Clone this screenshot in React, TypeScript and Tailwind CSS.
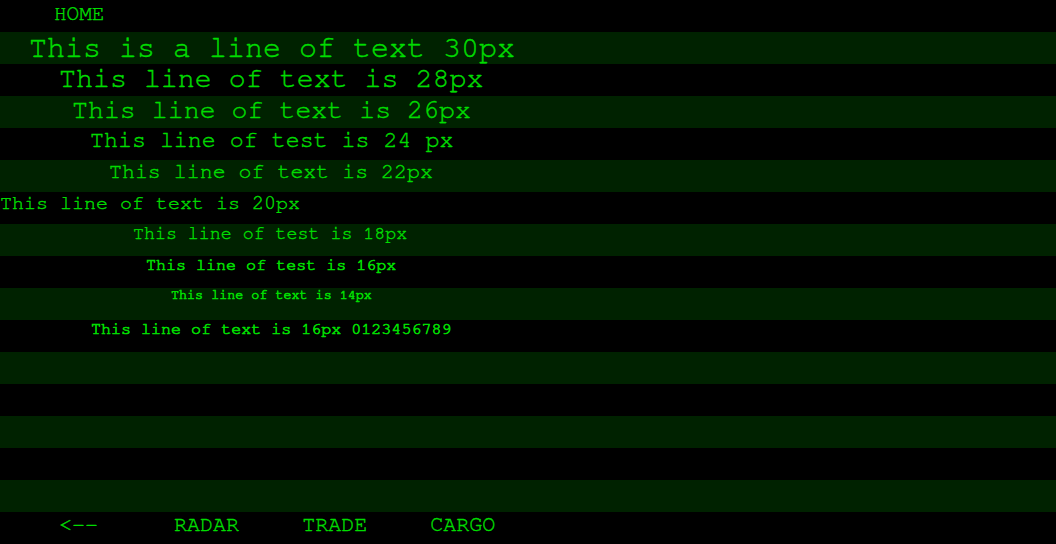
const rows = [
  { text: "This is a line of text 30px", cls: "pl-[29px] text-[30px]" },
  { text: "This line of text is 28px", cls: "pl-[59px] text-[28.3px]" },
  { text: "This line of text is 26px", cls: "pl-[72px] text-[26.6px]" },
  { text: "This line of test is 24 px", cls: "pl-[90px] text-[23.3px]" },
  { text: "This line of text is 22px", cls: "pl-[109px] text-[21.6px]" },
  { text: "This line of text is 20px", cls: "pl-0 text-[20px]" },
  { text: "This line of test is 18px", cls: "pl-[133px] text-[18.3px]" },
  { text: "This line of test is 16px", cls: "pl-[146px] text-[16.7px] [-webkit-text-stroke:0.7px_#00dd00]" },
  { text: "This line of text is 14px", cls: "pl-[171px] text-[13.4px] [-webkit-text-stroke:0.7px_#00dd00]" },
  { text: "This line of text is 16px 0123456789", cls: "pl-[91px] text-[16.7px] [-webkit-text-stroke:0.7px_#00dd00]" },
  { text: "", cls: "" },
  { text: "", cls: "" },
  { text: "", cls: "" },
  { text: "", cls: "" },
  { text: "", cls: "" },
];

export default function App() {
  return (
    <div className="w-[1056px] h-[544px] bg-black text-[#00dd00] [-webkit-text-stroke:0.4px_#00dd00] font-['Nimbus_Mono_PS','FreeMono','Courier','Courier_New','Liberation_Mono',monospace] overflow-hidden flex flex-col">
      {/* header */}
      <div className="h-8 pl-[54px] pt-[3px] text-[21px] leading-none whitespace-pre">HOME</div>

      {rows.map((row, i) => (
        <div
          key={i}
          className={`h-8 pt-[1px] leading-none whitespace-pre ${i % 2 === 0 ? "bg-[#002200]" : "bg-black"} ${row.cls}`}
        >
          {row.text}
        </div>
      ))}

      {/* bottom nav */}
      <div className="h-8 pt-[2px] flex text-[21.7px] leading-none whitespace-pre">
        <span className="ml-[59px]">&lt;--</span>
        <span className="ml-[76px]">RADAR</span>
        <span className="ml-[63px]">TRADE</span>
        <span className="ml-[63px]">CARGO</span>
      </div>
    </div>
  );
}
